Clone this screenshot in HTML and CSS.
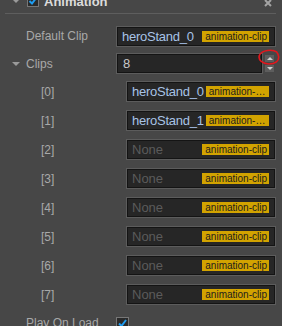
FILE: index.html
```html
<!DOCTYPE html>
<html lang="en">
<head>
    <meta charset="UTF-8">
    <title>Animation Inspector</title>
    <link rel="stylesheet" href="styles.css">
</head>
<body>

    <!-- Component header -->
    <div class="comp-header">
        <span class="fold"></span>
        <span class="check">
            <svg width="10" height="10" viewBox="0 0 10 10"><polyline points="1.5,5 4,7.5 8.5,1.5" fill="none" stroke="#1f9df2" stroke-width="2"/></svg>
        </span>
        <span class="comp-title">Animation</span>
        <span class="close">
            <svg width="8" height="8" viewBox="0 0 8 8"><path d="M1 1L7 7M7 1L1 7" stroke="#a4a4a4" stroke-width="2"/></svg>
        </span>
    </div>

    <!-- Default Clip -->
    <div class="prop first">
        <span class="fold-slot"></span>
        <span class="prop-label">Default Clip</span>
        <div class="field">
            <span class="asset-name">heroStand_0</span>
            <span class="asset-type">animation-clip</span>
        </div>
    </div>

    <!-- Clips array size -->
    <div class="prop clips">
        <span class="fold-slot"><span class="fold"></span></span>
        <span class="prop-label">Clips</span>
        <div class="field num">8</div>
        <div class="spinner">
            <span class="spin up"></span>
            <span class="spin down"></span>
        </div>
        <svg class="mark" width="24" height="18" viewBox="0 0 24 18">
            <path d="M20 3C15 0 5 1 2.5 6C0.5 11 6 15 12 15C18 15 22.5 12 21.5 7C21 4 19 2 16 1.5" fill="none" stroke="#e3161c" stroke-width="1.6"/>
        </svg>
    </div>

    <!-- Clip entries -->
    <div class="items">
        <div class="item">
            <span class="index">[0]</span>
            <div class="field"><span class="asset-name">heroStand_0</span><span class="asset-type">animation-clip</span></div>
        </div>
        <div class="item">
            <span class="index">[1]</span>
            <div class="field"><span class="asset-name">heroStand_1</span><span class="asset-type">animation-clip</span></div>
        </div>
        <div class="item">
            <span class="index">[2]</span>
            <div class="field"><span class="asset-name empty">None</span><span class="asset-type">animation-clip</span></div>
        </div>
        <div class="item">
            <span class="index">[3]</span>
            <div class="field"><span class="asset-name empty">None</span><span class="asset-type">animation-clip</span></div>
        </div>
        <div class="item">
            <span class="index">[4]</span>
            <div class="field"><span class="asset-name empty">None</span><span class="asset-type">animation-clip</span></div>
        </div>
        <div class="item">
            <span class="index">[5]</span>
            <div class="field"><span class="asset-name empty">None</span><span class="asset-type">animation-clip</span></div>
        </div>
        <div class="item">
            <span class="index">[6]</span>
            <div class="field"><span class="asset-name empty">None</span><span class="asset-type">animation-clip</span></div>
        </div>
        <div class="item">
            <span class="index">[7]</span>
            <div class="field"><span class="asset-name empty">None</span><span class="asset-type">animation-clip</span></div>
        </div>
    </div>

    <!-- Play On Load -->
    <div class="prop">
        <span class="fold-slot"></span>
        <span class="prop-label">Play On Load</span>
        <span class="check big">
            <svg width="11" height="11" viewBox="0 0 11 11"><polyline points="2,5.5 4.5,8 9,2" fill="none" stroke="#1f9df2" stroke-width="2"/></svg>
        </span>
    </div>

</body>
</html>
```

FILE: styles.css
```css
/* General */
body {
    margin: 0;
    background-color: #474747;
    font-family: "Liberation Sans", Arial, sans-serif;
    font-size: 12px;
    color: #a9a9a9;
    overflow: hidden;
}

/* Component header */
.comp-header {
    display: flex;
    align-items: center;
    height: 24px;
    margin: -11px 6px 0 5px;
    padding-left: 7px;
    border-bottom: 1px solid #5e5e5e;
}

.fold {
    width: 0;
    height: 0;
    border-left: 4px solid transparent;
    border-right: 4px solid transparent;
    border-top: 4px solid #9a9a9a;
}

.check {
    display: flex;
    align-items: center;
    justify-content: center;
    width: 10px;
    height: 10px;
    margin-left: 7px;
    background-color: #2a2a2a;
    border: 1px solid #777;
}

.comp-title {
    margin-left: 5px;
    font-size: 13px;
    font-weight: bold;
    color: #dcdcdc;
}

.close {
    display: flex;
    margin-left: auto;
    margin-right: 4px;
    margin-top: 4px;
}

/* Property rows */
.prop {
    position: relative;
    display: flex;
    align-items: center;
    height: 28px;
    padding: 0 7px 0 12px;
}

.prop.first {
    margin-top: 8px;
}

.prop.clips {
    height: 27px;
    padding-right: 8px;
}

.fold-slot {
    display: flex;
    width: 14px;
    flex-shrink: 0;
}

.prop-label {
    width: 91px;
    flex-shrink: 0;
    white-space: nowrap;
}

/* Inputs */
.field {
    flex: 1;
    min-width: 0;
    display: flex;
    align-items: center;
    gap: 2px;
    height: 19px;
    box-sizing: border-box;
    padding: 0 5px 0 4px;
    background-color: #262626;
    border: 1px solid #141414;
    box-shadow: 0 0 0 1px #5c5c5c;
}

.field.num {
    margin-right: 3px;
    padding-left: 5px;
    font-size: 13px;
    color: #c8c8c8;
}

.asset-name {
    flex-shrink: 0;
    font-size: 13px;
    letter-spacing: -0.25px;
    color: #a8c3e6;
    white-space: nowrap;
}

.asset-name.empty {
    color: #5b5b5b;
    letter-spacing: 0;
}

.asset-type {
    flex: 0 1 auto;
    min-width: 0;
    margin-left: auto;
    padding: 0 2px 0 3px;
    overflow: hidden;
    text-overflow: ellipsis;
    white-space: nowrap;
    font-size: 10px;
    line-height: 11px;
    color: #1d1d1d;
    background-color: #d2a300;
}

/* Number spinner */
.spinner {
    display: flex;
    flex-direction: column;
    gap: 3px;
}

.spin {
    display: flex;
    align-items: center;
    justify-content: center;
    width: 9px;
    height: 7px;
    background-color: #5d5d5d;
}

.spin::after {
    content: "";
    border-left: 3px solid transparent;
    border-right: 3px solid transparent;
}

.spin.up::after {
    border-bottom: 3px solid #cfcfcf;
}

.spin.down::after {
    border-top: 3px solid #cfcfcf;
}

/* Annotation drawn over the spinner */
.mark {
    position: absolute;
    left: 257px;
    top: -1px;
}

/* Array items */
.item {
    display: flex;
    align-items: center;
    height: 29px;
    padding: 0 7px 0 41px;
}

.index {
    width: 86px;
    flex-shrink: 0;
}

.check.big {
    width: 11px;
    height: 11px;
    margin-left: -1px;
}
```
